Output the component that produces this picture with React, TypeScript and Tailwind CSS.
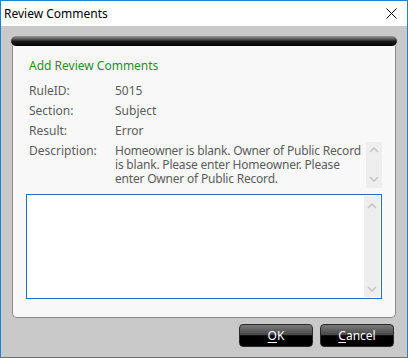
import React from "react";

const font = { fontFamily: '"Noto Sans", "Open Sans", sans-serif' };

function Arrows({ top, bottom }: { top: string; bottom: string }) {
  return (
    <div className="flex flex-col justify-between items-center w-[16px] h-full bg-[#eeeeee]">
      <svg width="10" height="6" viewBox="0 0 10 6" className={top}>
        <path d="M1 5 L5 1 L9 5" fill="none" stroke="#c4c4c4" strokeWidth="1.5" />
      </svg>
      <svg width="10" height="6" viewBox="0 0 10 6" className={bottom}>
        <path d="M1 1 L5 5 L9 1" fill="none" stroke="#c4c4c4" strokeWidth="1.5" />
      </svg>
    </div>
  );
}

function Btn({ first, rest }: { first: string; rest: string }) {
  return (
    <button className="w-[74px] h-[23px] rounded-[4px] border border-[#2a2a2a] bg-[linear-gradient(to_bottom,#7a7a7a_0%,#4a4a4a_45%,#000_52%,#000_100%)] text-white text-[12px] leading-none flex items-center justify-center">
      <span className="underline underline-offset-[2px]">{first}</span>
      {rest}
    </button>
  );
}

export default function App() {
  return (
    <div style={font} className="w-[408px] h-[358px] border border-[#1883d7] bg-[#c9c9c9] flex flex-col">
      <div className="h-[25px] bg-white flex items-center justify-between pl-[3px] pr-[10px] shrink-0">
        <span className="text-[12px] text-black leading-none">Review Comments</span>
        <svg width="11" height="11" viewBox="0 0 11 11">
          <path d="M0.5 0.5 L10.5 10.5 M10.5 0.5 L0.5 10.5" stroke="#000" strokeWidth="1" />
        </svg>
      </div>
      <div className="flex-1 flex flex-col px-[10px] pt-[10px]">
        <div className="h-[10px] rounded-full bg-[linear-gradient(to_bottom,#9a9a9a_0%,#5a5a5a_30%,#1a1a1a_55%,#000_100%)]" />
        <div className="h-[272px] bg-[#f8f8f8] border-x border-b border-[#8a8a8a] rounded-b-[5px] mx-[1px] pl-[16px] pr-[13px] pt-[12px] flex flex-col">
          <div className="text-[12px] text-[#1f8f1f] leading-[16px]">Add Review Comments</div>
          <div className="text-[12px] text-[#5c5c5c] mt-[9px] flex flex-col gap-[4px]">
            <div className="flex leading-[16px]">
              <span className="w-[86px]">RuleID:</span>
              <span>5015</span>
            </div>
            <div className="flex leading-[16px]">
              <span className="w-[86px]">Section:</span>
              <span>Subject</span>
            </div>
            <div className="flex leading-[16px]">
              <span className="w-[86px]">Result:</span>
              <span>Error</span>
            </div>
            <div className="flex">
              <span className="w-[86px] leading-[16px]">Description:</span>
              <div className="flex-1 flex h-[46px] mt-[-1px]">
                <div className="flex-1 leading-[14px] pt-[2px] tracking-[-0.2px]">
                  Homeowner is blank. Owner of Public Record is blank. Please enter Homeowner. Please enter Owner of Public Record.
                </div>
                <Arrows top="mt-[5px]" bottom="mb-[6px]" />
              </div>
            </div>
          </div>
          <div className="mt-[6px] ml-[-3px] h-[105px] border border-[#1a72c6] bg-white flex justify-end p-[1px]">
            <Arrows top="mt-[7px]" bottom="mb-[5px]" />
          </div>
        </div>
        <div className="flex justify-end gap-[7px] mt-[6px] pr-[3px]">
          <Btn first="O" rest="K" />
          <Btn first="C" rest="ancel" />
        </div>
      </div>
    </div>
  );
}
